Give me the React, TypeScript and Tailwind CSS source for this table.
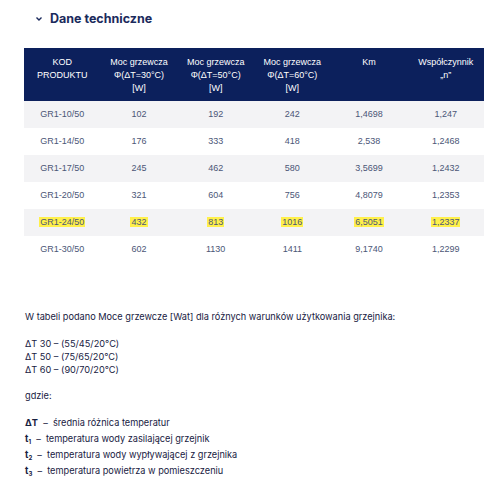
import React from "react";

const rows = [
  ["GR1-10/50", "102", "192", "242", "1,4698", "1,247"],
  ["GR1-14/50", "176", "333", "418", "2,538", "1,2468"],
  ["GR1-17/50", "245", "462", "580", "3,5699", "1,2432"],
  ["GR1-20/50", "321", "604", "756", "4,8079", "1,2353"],
  ["GR1-24/50", "432", "813", "1016", "6,5051", "1,2337"],
  ["GR1-30/50", "602", "1130", "1411", "9,1740", "1,2299"],
];

const headers: string[][] = [
  ["KOD", "PRODUKTU"],
  ["Moc grzewcza", "Φ(ΔT=30°C)", "[W]"],
  ["Moc grzewcza", "Φ(ΔT=50°C)", "[W]"],
  ["Moc grzewcza", "Φ(ΔT=60°C)", "[W]"],
  ["Km"],
  ["Współczynnik", "„n”"],
];

export default function App() {
  return (
    <div className="w-[500px] h-[500px] bg-white overflow-hidden" style={{ fontFamily: "Inter, 'Liberation Sans', sans-serif" }}>
      <div className="flex items-center pt-[12px] pl-[35px] h-[26px]">
        <svg width="8" height="6" viewBox="0 0 8 6" className="mr-[7px]">
          <path d="M1.5 1.5 L4 4 L6.5 1.5" fill="none" stroke="#1b2a5c" strokeWidth="1.4" />
        </svg>
        <span className="text-[12.5px] font-bold text-[#1b2a5c]">Dane techniczne</span>
      </div>
      <div className="mt-[22px] ml-[24px] w-[460px]" style={{ fontFamily: "'Liberation Sans', Arial, sans-serif" }}>
        <div className="grid grid-cols-6 bg-[#0c205c] h-[53px] pt-[8px]">
          {headers.map((h, i) => (
            <div key={i} className="text-center text-white text-[9px] leading-[13px]">
              {h.map((l, j) => (
                <div key={j}>{l}</div>
              ))}
            </div>
          ))}
        </div>
        {rows.map((r, i) => (
          <div key={i} className={`grid grid-cols-6 h-[27px] items-center ${i % 2 === 0 ? "bg-[#f3f3f5]" : "bg-white"}`}>
            {r.map((c, j) => (
              <div key={j} className="text-center text-[9px] text-[#4b5677]">
                {i === 4 ? <span className="bg-[#fff04a] px-[1px]">{c}</span> : c}
              </div>
            ))}
          </div>
        ))}
      </div>
      <div className="pl-[25px] text-[9.2px] text-[#18213f] leading-[13px]">
        <div className="mt-[47px]">W tabeli podano Moce grzewcze [Wat] dla różnych warunków użytkowania grzejnika:</div>
        <div className="mt-[14px]">ΔT 30 – (55/45/20°C)</div>
        <div>ΔT 50 – (75/65/20°C)</div>
        <div>ΔT 60 – (90/70/20°C)</div>
        <div className="mt-[13px]">gdzie:</div>
        <div className="mt-[13px] leading-[16px]">
          <div><b>ΔT</b>&nbsp; – &nbsp;średnia różnica temperatur</div>
          <div><b>t<sub className="text-[6px]">1</sub></b>&nbsp; – &nbsp;temperatura wody zasilającej grzejnik</div>
          <div><b>t<sub className="text-[6px]">2</sub></b>&nbsp; – &nbsp;temperatura wody wypływającej z grzejnika</div>
          <div><b>t<sub className="text-[6px]">3</sub></b>&nbsp; – &nbsp;temperatura powietrza w pomieszczeniu</div>
        </div>
      </div>
    </div>
  );
}
